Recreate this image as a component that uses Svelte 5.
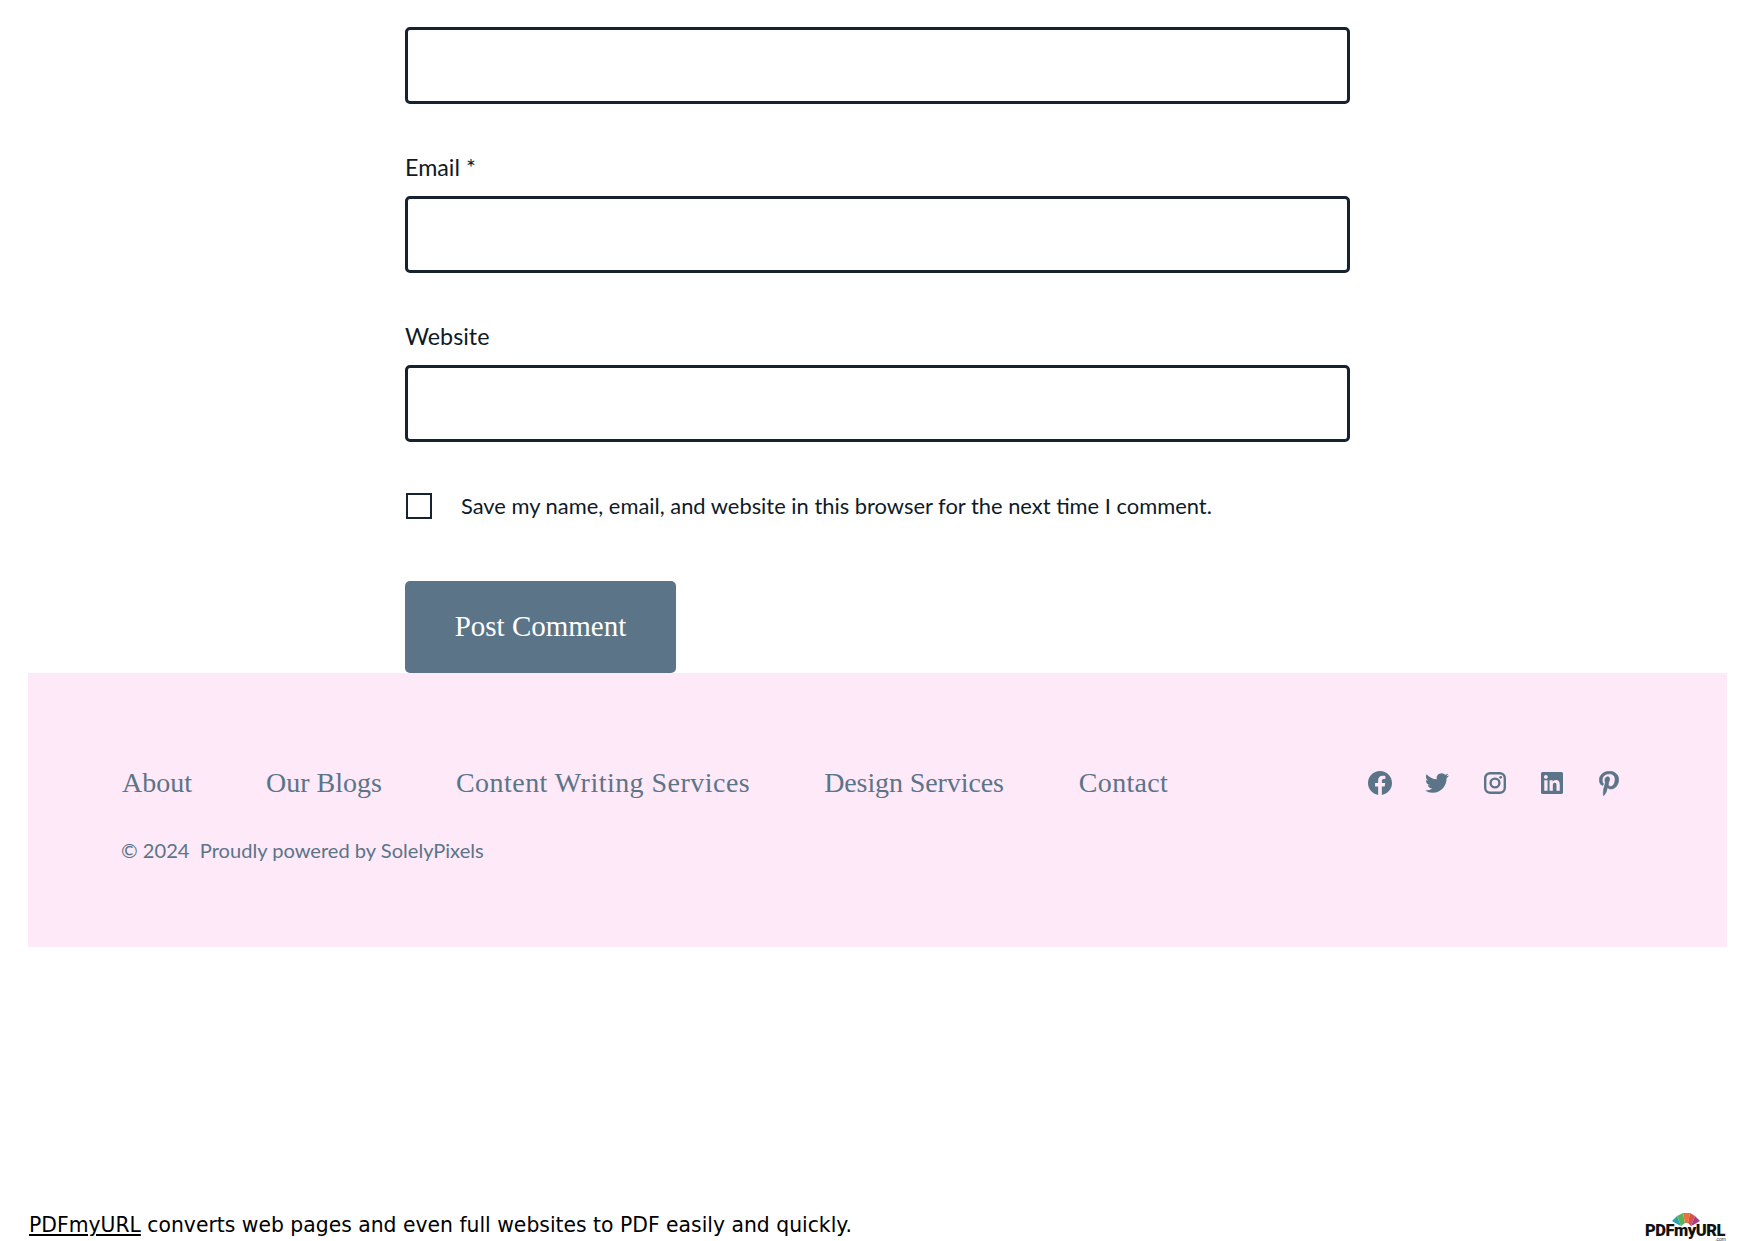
<script>
  const fields = ['', 'Email *', 'Website'];
  const nav = ['About', 'Our Blogs', 'Content Writing Services', 'Design Services', 'Contact'];
</script>

<div class="page">
  <form class="form">
    {#each fields as f, i}
      <div class="field" class:first={i === 0}>
        {#if f}<label for={'f' + i}>{f}</label>{/if}
        <input id={'f' + i} type="text" />
      </div>
    {/each}
    <div class="check">
      <input id="save" type="checkbox" />
      <label for="save">Save my name, email, and website in this browser for the next time I comment.</label>
    </div>
    <button type="button">Post Comment</button>
  </form>

  <footer>
    <div class="row">
      <nav>
        {#each nav as n}<a href="#top">{n}</a>{/each}
      </nav>
      <div class="social">
        <svg class="fb" viewBox="0 0 24 24"><path d="M24 12.073c0-6.627-5.373-12-12-12s-12 5.373-12 12c0 5.99 4.388 10.954 10.125 11.854v-8.385H7.078v-3.47h3.047V9.43c0-3.007 1.792-4.669 4.533-4.669 1.312 0 2.686.235 2.686.235v2.953H15.83c-1.491 0-1.956.925-1.956 1.874v2.25h3.328l-.532 3.47h-2.796v8.385C19.612 23.027 24 18.062 24 12.073z"/></svg>
        <svg class="tw" viewBox="0 0 24 24"><path d="M23.953 4.57a10 10 0 01-2.825.775 4.958 4.958 0 002.163-2.723c-.951.555-2.005.959-3.127 1.184a4.92 4.92 0 00-8.384 4.482C7.69 8.095 4.067 6.13 1.64 3.162a4.822 4.822 0 00-.666 2.475c0 1.71.87 3.213 2.188 4.096a4.904 4.904 0 01-2.228-.616v.06a4.923 4.923 0 003.946 4.827 4.996 4.996 0 01-2.212.085 4.936 4.936 0 004.604 3.417 9.867 9.867 0 01-6.102 2.105c-.39 0-.779-.023-1.17-.067a13.995 13.995 0 007.557 2.209c9.053 0 13.998-7.496 13.998-13.985 0-.21 0-.42-.015-.63A9.935 9.935 0 0024 4.59z"/></svg>
        <svg class="ig" viewBox="0 0 22 22"><rect x="1.2" y="1.2" width="19.6" height="19.6" rx="5" fill="none" stroke="#5b7488" stroke-width="2.4"/><circle cx="11" cy="11" r="4.4" fill="none" stroke="#5b7488" stroke-width="2.4"/><circle cx="16.7" cy="5.3" r="1.4"/></svg>
        <svg class="li" viewBox="0 0 24 24"><path d="M20.447 20.452h-3.554v-5.569c0-1.328-.027-3.037-1.852-3.037-1.853 0-2.136 1.445-2.136 2.939v5.667H9.351V9h3.414v1.561h.046c.477-.9 1.637-1.85 3.37-1.85 3.601 0 4.267 2.37 4.267 5.455v6.286zM5.337 7.433c-1.144 0-2.063-.926-2.063-2.065 0-1.138.92-2.063 2.063-2.063 1.14 0 2.064.925 2.064 2.063 0 1.139-.925 2.065-2.064 2.065zm1.782 13.019H3.555V9h3.564v11.452zM22.225 0H1.771C.792 0 0 .774 0 1.729v20.542C0 23.227.792 24 1.771 24h20.451C23.2 24 24 23.227 24 22.271V1.729C24 .774 23.2 0 22.222 0h.003z"/></svg>
        <svg class="pi" viewBox="-8 0 400 512" preserveAspectRatio="none"><path stroke="#5b7488" stroke-width="14" d="M204 6.5C101.4 6.5 0 74.9 0 185.6 0 256 39.6 296 63.6 296c9.9 0 15.6-27.6 15.6-35.4 0-9.3-23.7-29.1-23.7-67.8 0-80.4 61.2-137.4 140.4-137.4 68.1 0 118.5 38.7 118.5 109.8 0 53.1-21.3 152.7-90.3 152.7-24.9 0-46.2-18-46.2-43.8 0-37.8 26.4-74.4 26.4-113.4 0-66.2-93.9-54.2-93.9 25.8 0 16.8 2.1 35.4 9.6 50.7-13.8 59.4-42 147.9-42 209.1 0 18.9 2.7 37.5 4.5 56.4 3.4 3.8 1.7 3.4 6.9 1.5 50.4-69 48.6-82.5 71.4-172.8 12.3 23.4 44.1 36 69.3 36 106.2 0 153.9-103.5 153.9-196.8C384 71.3 298.2 6.5 204 6.5z"/></svg>
      </div>
    </div>
    <p class="copy">© 2024&nbsp; Proudly powered by SolelyPixels</p>
  </footer>

  <div class="bar">
    <p><a href="#top">PDFmyURL</a> converts web pages and even full websites to PDF easily and quickly.</p>
    <div class="logo">
      <svg viewBox="0 0 28 13" width="28" height="13">
        <path d="M0 8 L5 3 L9 13 L5 11 Z" fill="#2aa3b5"/>
        <path d="M5 3 L11 0 L13 10 L9 13 Z" fill="#5cb25a"/>
        <path d="M11 0 L18 0 L16 10 L13 10 Z" fill="#e8743b"/>
        <path d="M18 0 L23 3 L19 13 L16 10 Z" fill="#d8504a"/>
        <path d="M23 3 L28 8 L23 11 L19 13 Z" fill="#a83f86"/>
      </svg>
      <span class="word">PDFmyURL</span>
      <span class="com">.com</span>
    </div>
  </div>
</div>

<style>
  :global(body) { margin: 0; background: #fff; }
  .page { width: 1756px; height: 1241px; display: flex; flex-direction: column; box-sizing: border-box; padding: 0 29px 0 28px; overflow: hidden; }
  .form { width: 945px; margin-left: 377px; height: 673px; flex: none; box-sizing: border-box; padding-top: 27px; font-family: Lato, sans-serif; color: #0f1a26; }
  .field { margin-top: 41px; }
  .field.first { margin-top: 0; }
  .field label { display: block; font-size: 23.3px; line-height: 30px; height: 41px; margin-bottom: 10px; box-sizing: border-box; padding-top: 7px; }
  .field input { display: block; height: 77px; box-sizing: border-box; width: 100%; border: 3px solid #162230; border-radius: 5px; background: #fff; margin: 0; padding: 0; outline: none; }
  .check { display: flex; align-items: center; height: 28px; margin-top: 50px; }
  .check input { appearance: none; width: 26px; height: 26px; box-sizing: border-box; margin: 0 29px 0 1px; border: 2px solid #162230; background: #fff; }
  .check label { font-size: 21.9px; line-height: 28px; }
  button { display: block; margin: 61px 0 0; width: 271px; height: 92px; border: 0; border-radius: 5px; background: #5b7488; color: #fff; font-family: "Liberation Serif", serif; font-size: 29px; padding: 0 0 2px; }
  footer { height: 274px; flex: none; background: #fde9f7; box-sizing: border-box; padding: 88px 89px 0 93px; color: #5b7488; }
  .row { display: flex; align-items: center; justify-content: space-between; height: 44px; }
  nav { display: flex; gap: 74px; font-family: "Liberation Serif", serif; font-size: 28px; margin-left: 1px; }
  nav a { color: #5b7488; text-decoration: none; }
  nav a:nth-child(3) { letter-spacing: 0.47px; }
  nav a:nth-child(4) { letter-spacing: -0.1px; margin-right: 1px; }
  nav a:nth-child(5) { letter-spacing: 0.3px; }
  .social { display: grid; grid-template-columns: repeat(5, 57.3px); justify-items: center; align-items: center; fill: #5b7488; }
  .social svg { display: block; }
  .fb { width: 24px; height: 24px; }
  .tw { width: 24px; height: 24px; }
  .ig { width: 22px; height: 22px; }
  .li { width: 22px; height: 22px; }
  .pi { width: 20px; height: 25px; }
  .copy { margin: 30px 0 0; font-family: Lato, sans-serif; font-size: 20.1px; line-height: 30px; }
  .bar { flex: 1; display: flex; justify-content: space-between; align-items: flex-end; padding-bottom: 4px; padding-left: 1px; font-family: "DejaVu Sans", sans-serif; color: #000; }
  .bar p { margin: 0; font-size: 20.35px; line-height: 24px; }
  .bar a { color: #000; }
  .logo { position: relative; width: 82px; height: 26px; margin-bottom: -2px; }
  .logo svg { position: absolute; left: 27px; top: 0; }
  .word { position: absolute; left: 0; top: 12px; font-family: Roboto, sans-serif; font-weight: 900; font-size: 16.5px; letter-spacing: -0.5px; line-height: 12px; color: #111; }
  .com { position: absolute; right: 1px; bottom: -2px; font-size: 5px; line-height: 4px; color: #333; font-family: "Liberation Sans", sans-serif; }
</style>
